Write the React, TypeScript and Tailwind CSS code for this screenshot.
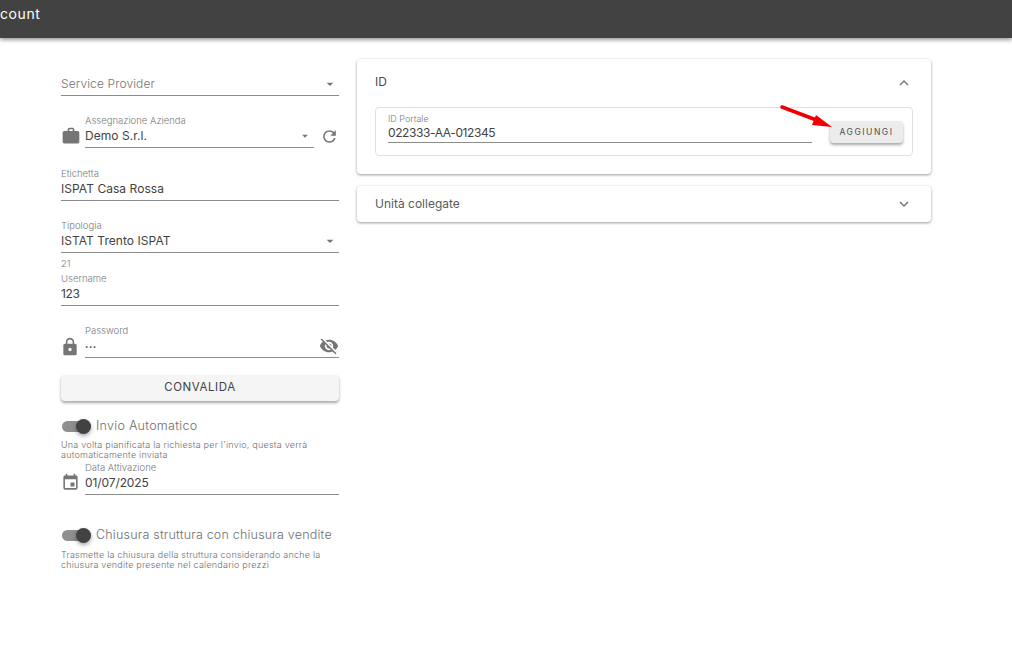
const F = "font-['Inter',sans-serif]";

const P = {
  work: "M20 6h-4V4c0-1.11-.89-2-2-2h-4c-1.11 0-2 .89-2 2v2H4c-1.11 0-1.99.89-1.99 2L2 19c0 1.11.89 2 2 2h16c1.11 0 2-.89 2-2V8c0-1.11-.89-2-2-2zm-6 0h-4V4h4v2z",
  refresh: "M17.65 6.35C16.2 4.9 14.21 4 12 4c-4.42 0-7.99 3.58-7.99 8s3.57 8 7.99 8c3.73 0 6.84-2.55 7.73-6h-2.08c-.82 2.33-3.04 4-5.65 4-3.31 0-6-2.69-6-6s2.69-6 6-6c1.66 0 3.14.69 4.22 1.78L13 11h7V4l-2.35 2.35z",
  lock: "M18 8h-1V6c0-2.76-2.24-5-5-5S7 3.24 7 6v2H6c-1.1 0-2 .9-2 2v10c0 1.1.9 2 2 2h12c1.1 0 2-.9 2-2V10c0-1.1-.9-2-2-2zm-6 9c-1.1 0-2-.9-2-2s.9-2 2-2 2 .9 2 2-.9 2-2 2zm3.1-9H8.9V6c0-1.71 1.39-3.1 3.1-3.1 1.71 0 3.1 1.39 3.1 3.1v2z",
  off: "M12 7c2.76 0 5 2.24 5 5 0 .65-.13 1.26-.36 1.83l2.92 2.92c1.51-1.26 2.7-2.89 3.43-4.75-1.73-4.39-6-7.5-11-7.5-1.4 0-2.74.25-3.98.7l2.16 2.16C10.74 7.13 11.35 7 12 7zM2 4.27l2.28 2.28.46.46C3.08 8.3 1.78 10.02 1 12c1.73 4.39 6 7.5 11 7.5 1.55 0 3.03-.3 4.38-.84l.42.42L19.73 22 21 20.73 3.27 3 2 4.27zM7.53 9.8l1.55 1.55c-.05.21-.08.43-.08.65 0 1.66 1.34 3 3 3 .22 0 .44-.03.65-.08l1.55 1.55c-.67.33-1.41.53-2.2.53-2.76 0-5-2.24-5-5 0-.79.2-1.53.53-2.2zm4.31-.78l3.15 3.15.02-.16c0-1.66-1.34-3-3-3l-.17.01z",
  event: "M17 12h-5v5h5v-5zM16 1v2H8V1H6v2H5c-1.11 0-1.99.9-1.99 2L3 19c0 1.1.89 2 2 2h14c1.1 0 2-.9 2-2V5c0-1.1-.9-2-2-2h-1V1h-2zm3 18H5V8h14v11z",
  less: "M12 8l-6 6 1.41 1.41L12 10.83l4.59 4.58L18 14z",
  more: "M16.59 8.59L12 13.17 7.41 8.59 6 10l6 6 6-6z",
  drop: "M7 10l5 5 5-5z",
};

function Icon({ d, size = 20, color = "#757575", className = "" }: { d: string; size?: number; color?: string; className?: string }) {
  return (
    <svg width={size} height={size} viewBox="0 0 24 24" fill={color} className={`shrink-0 ${className}`}>
      <path d={d} />
    </svg>
  );
}

function Field({
  label,
  value,
  placeholder,
  right,
  className = "",
  valueClass = "tracking-[0.05px]",
}: {
  label?: string;
  value?: string;
  placeholder?: string;
  right?: React.ReactNode;
  className?: string;
  valueClass?: string;
}) {
  return (
    <div className={`flex-1 min-w-0 ${className}`}>
      <div className="h-[13px] text-[9.5px] font-light leading-[14px] text-[#7a7a7a]">{label}</div>
      <div className="flex h-[21px] items-center justify-between border-b border-[#8c8c8c] pb-[2px]">
        <span
          className={
            placeholder
              ? "text-[12px] font-light tracking-[0.12px] text-[#757575]"
              : `text-[12px] text-[#424242] ${valueClass}`
          }
        >
          {placeholder || value}
        </span>
        {right}
      </div>
    </div>
  );
}

function Toggle({ label, className = "", labelClass = "tracking-[0.28px]" }: { label: string; className?: string; labelClass?: string }) {
  return (
    <div className={`flex h-[20px] items-center ${className}`}>
      <div className="relative ml-[1px] h-[11px] w-[29px] shrink-0 rounded-full bg-[#8f8f8f]">
        <div className="absolute -top-[2px] left-[14px] h-[15px] w-[15px] rounded-full bg-[#424242] shadow-[0_2px_4px_rgba(0,0,0,0.35)]" />
      </div>
      <span className={`ml-[5px] whitespace-nowrap text-[12.5px] font-light text-[#6e6e6e] ${labelClass}`}>{label}</span>
    </div>
  );
}

function Helper({ children, className = "" }: { children: React.ReactNode; className?: string }) {
  return <p className={`w-[278px] text-[9px] font-light leading-[10px] tracking-[0.22px] text-[#6e6e6e] ${className}`}>{children}</p>;
}

export default function App() {
  return (
    <div className={`min-h-[671px] overflow-hidden bg-white ${F}`}>
      <header className="flex h-[38px] items-start bg-[#424242] shadow-[0_2px_4px_rgba(0,0,0,0.4)]">
        <span className="pt-[5px] text-[14px] leading-[18px] tracking-[0.6px] text-white">count</span>
      </header>

      <main className="ml-[61px] mt-[21px] flex items-start gap-[18px]">
        <section className="w-[278px] shrink-0 pt-[3px]">
          <Field placeholder="Service Provider" right={<Icon d={P.drop} size={16} className="mr-px" />} />

          <div className="mt-[18px] flex items-end">
            <div className="flex w-[24px] shrink-0 pb-[2px]">
              <Icon d={P.work} size={20} />
            </div>
            <Field label="Assegnazione Azienda" value="Demo S.r.l." right={<Icon d={P.drop} size={14} className="mr-[2px]" />} />
            <div className="flex w-[25px] shrink-0 justify-end pb-[2px]">
              <Icon d={P.refresh} size={19} />
            </div>
          </div>

          <Field className="mt-[19px]" label="Etichetta" value="ISPAT Casa Rossa" />
          <Field className="mt-[18px]" label="Tipologia" value="ISTAT Trento ISPAT" right={<Icon d={P.drop} size={16} className="mr-px" />} />

          <div className="mt-[4px] h-[14px] text-[9.5px] font-light leading-[14px] text-[#7a7a7a]">21</div>
          <Field className="mt-[1px]" label="Username" value="123" valueClass="tracking-[-0.3px]" />

          <div className="mt-[18px] flex items-end">
            <div className="flex w-[24px] shrink-0 pb-[1px]">
              <Icon d={P.lock} size={20} className="-ml-px" />
            </div>
            <Field label="Password" value="•••" valueClass="!text-[6px] tracking-[0.5px]" right={<Icon d={P.off} size={20} />} />
          </div>

          <button className="mt-[17px] block h-[26px] w-full rounded-[4px] bg-[#f5f5f5] text-center text-[11.5px] tracking-[0.55px] text-[#424242] shadow-[0_2px_3px_rgba(0,0,0,0.35)]">
            CONVALIDA
          </button>

          <Toggle label="Invio Automatico" className="mt-[15px]" />
          <Helper className="mt-[4px]">Una volta pianificata la richiesta per l'invio, questa verrà automaticamente inviata</Helper>

          <div className="mt-[1px] flex items-end">
            <div className="flex w-[24px] shrink-0 pb-[3px]">
              <Icon d={P.event} size={19} />
            </div>
            <Field label="Data Attivazione" value="01/07/2025" valueClass="tracking-[-0.1px]" />
          </div>

          <Toggle label="Chiusura struttura con chiusura vendite" labelClass="tracking-[0.2px]" className="mt-[30px]" />
          <Helper className="mt-[5px]">Trasmette la chiusura della struttura considerando anche la chiusura vendite presente nel calendario prezzi</Helper>
        </section>

        <section className="flex w-[574px] shrink-0 flex-col gap-[12px]">
          <div className="rounded-[4px] bg-white px-[18px] pb-[18px] shadow-[0_1px_3px_rgba(0,0,0,0.4)]">
            <div className="flex h-[48px] items-center justify-between">
              <span className="-mt-[2px] text-[12px] text-[#4a4a4a]">ID</span>
              <Icon d={P.less} size={18} />
            </div>
            <div className="relative flex h-[49px] items-start rounded-[4px] border border-[#e0e0e0] pl-[12px] pr-[9px] pt-[5px]">
              <div className="w-[424px] shrink-0">
                <div className="h-[12px] text-[9px] font-light leading-[12px] text-[#7a7a7a]">ID Portale</div>
                <div className="flex h-[18px] items-center border-b border-[#8c8c8c] pb-[2px] text-[12px] tracking-[-0.4px] text-[#424242]">022333-AA-012345</div>
              </div>
              <button className="ml-[18px] mt-[8px] h-[22px] w-[73px] shrink-0 rounded-[4px] bg-[#ececec] text-[8.5px] tracking-[1.5px] text-[#4d4d4d] shadow-[0_2px_3px_rgba(0,0,0,0.35)]">
                AGGIUNGI
              </button>
              <svg width="58" height="30" viewBox="0 0 58 30" className="absolute left-[401px] -top-[5px]">
                <path d="M5 4 L42 18" stroke="#f00000" strokeWidth="3.5" strokeLinecap="round" />
                <path d="M55 24 L35 22 L39 12 Z" fill="#f00000" />
              </svg>
            </div>
          </div>

          <div className="flex h-[36px] items-center justify-between rounded-[4px] bg-white px-[18px] shadow-[0_1px_3px_rgba(0,0,0,0.4)]">
            <span className="text-[12px] text-[#5a5a5a]">Unità collegate</span>
            <Icon d={P.more} size={18} />
          </div>
        </section>
      </main>
    </div>
  );
}
